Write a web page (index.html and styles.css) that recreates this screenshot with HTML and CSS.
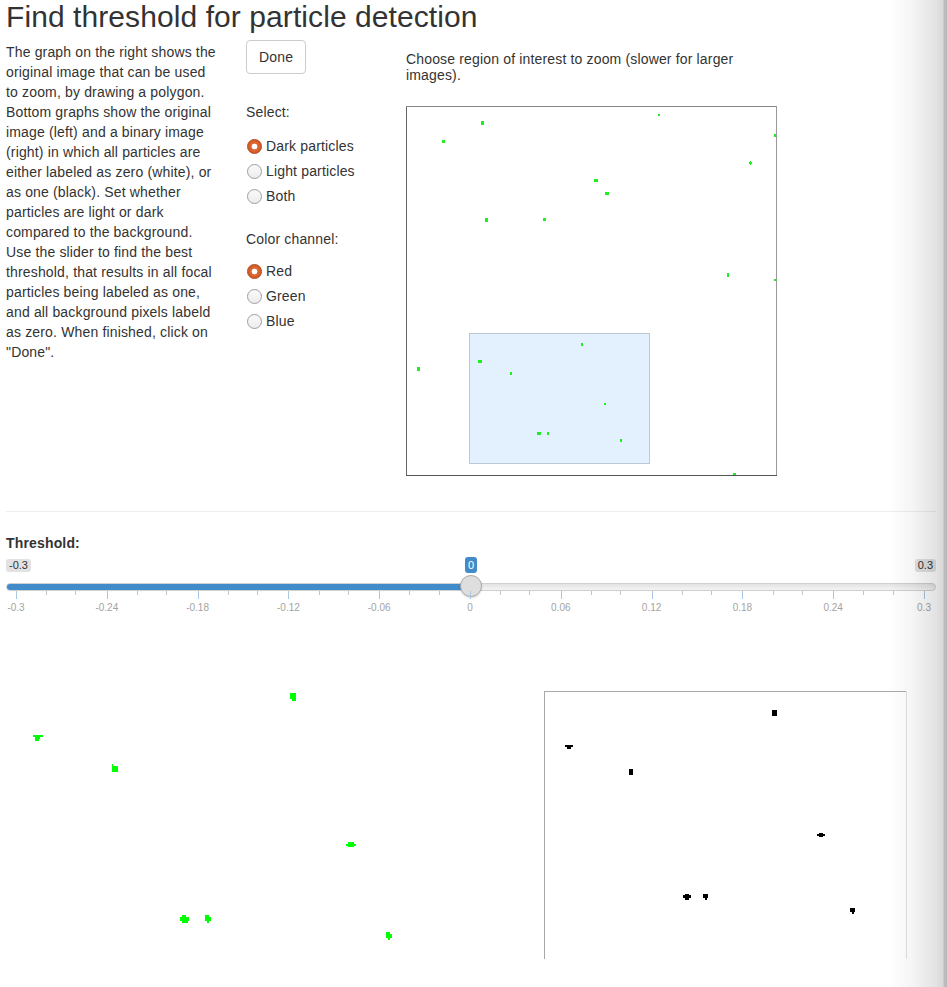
FILE: index.html
```html
<!DOCTYPE html>
<html>
<head>
<meta charset="utf-8">
<title>Find threshold for particle detection</title>
<link rel="stylesheet" href="styles.css">
</head>
<body>
<div class="page">
  <h1 class="title">Find threshold for particle detection</h1>
  <div class="top-row">
    <div class="col-text">
      <p>The graph on the right shows the original image that can be used to zoom, by drawing a polygon. Bottom graphs show the original image (left) and a binary image (right) in which all particles are either labeled as zero (white), or as one (black). Set whether particles are light or dark compared to the background. Use the slider to find the best threshold, that results in all focal particles being labeled as one, and all background pixels labeld as zero. When finished, click on "Done".</p>
    </div>
    <div class="col-controls">
      <button class="btn" type="button">Done</button>
      <div class="group">
        <div class="group-label">Select:</div>
        <div class="radios">
          <label class="radio"><input type="radio" name="ptype" checked><span>Dark particles</span></label>
          <label class="radio"><input type="radio" name="ptype"><span>Light particles</span></label>
          <label class="radio"><input type="radio" name="ptype"><span>Both</span></label>
        </div>
      </div>
      <div class="group group-channel">
        <div class="group-label">Color channel:</div>
        <div class="radios">
          <label class="radio"><input type="radio" name="chan" checked><span>Red</span></label>
          <label class="radio"><input type="radio" name="chan"><span>Green</span></label>
          <label class="radio"><input type="radio" name="chan"><span>Blue</span></label>
        </div>
      </div>
    </div>
    <div class="col-plot">
      <p class="plot-caption">Choose region of interest to zoom (slower for larger images).</p>
      <svg class="roi-plot" width="371" height="370" viewBox="0 0 371 370">
        <rect x="63.5" y="227.5" width="180" height="130" class="sel"/>
        <g class="gdots">
          <rect x="75" y="15" width="3" height="4"/>
          <rect x="36" y="34" width="3" height="3"/>
          <rect x="252" y="8" width="2" height="2"/>
          <rect x="368" y="28" width="2" height="3"/>
          <rect x="343" y="56" width="3" height="2"/>
          <rect x="344" y="55" width="1" height="4"/>
          <rect x="188" y="73" width="4" height="3"/>
          <rect x="199" y="86" width="4" height="3"/>
          <rect x="79" y="112" width="3" height="4"/>
          <rect x="137" y="112" width="3" height="3"/>
          <rect x="321" y="167" width="2" height="4"/>
          <rect x="368" y="173" width="2" height="2"/>
          <rect x="11" y="261" width="3" height="4"/>
          <rect x="72" y="254" width="4" height="3"/>
          <rect x="104" y="266" width="2" height="3"/>
          <rect x="175" y="237" width="2" height="3"/>
          <rect x="198" y="297" width="2" height="2"/>
          <rect x="131" y="326" width="4" height="3"/>
          <rect x="141" y="326" width="2" height="3"/>
          <rect x="214" y="333" width="2" height="3"/>
          <rect x="327" y="367" width="3" height="3"/>
        </g>
        <line x1="0.5" y1="0" x2="0.5" y2="370" class="b-left"/>
        <line x1="0" y1="0.5" x2="371" y2="0.5" class="b-top"/>
        <line x1="370.5" y1="0" x2="370.5" y2="370" class="b-right"/>
        <line x1="0" y1="369.5" x2="371" y2="369.5" class="b-bottom"/>
      </svg>
    </div>
  </div>

  <hr class="sep">

  <div class="threshold">
    <div class="th-label">Threshold:</div>
    <div class="irs">
      <span class="irs-min">-0.3</span>
      <span class="irs-max">0.3</span>
      <span class="irs-single" style="left:459px">0</span>
      <div class="irs-line"><div class="irs-bar" style="width:465px"></div></div>
      <div class="irs-handle" style="left:454px"></div>
      <div class="irs-grid">
        <div class="seg"><span class="lbl">-0.3</span></div>
        <div class="seg"><span class="lbl">-0.24</span></div>
        <div class="seg"><span class="lbl">-0.18</span></div>
        <div class="seg"><span class="lbl">-0.12</span></div>
        <div class="seg"><span class="lbl">-0.06</span></div>
        <div class="seg"><span class="lbl">0</span></div>
        <div class="seg"><span class="lbl">0.06</span></div>
        <div class="seg"><span class="lbl">0.12</span></div>
        <div class="seg"><span class="lbl">0.18</span></div>
        <div class="seg"><span class="lbl">0.24</span></div>
        <div class="seg seg-last"><span class="lbl">0.3</span></div>
      </div>
    </div>
  </div>

  <div class="bottom-row">
    <svg class="orig" width="532" height="268" viewBox="0 0 532 268">
      <g class="bdots">
        <rect x="284" y="2" width="6" height="6"/><rect x="286" y="8" width="4" height="2"/>
        <rect x="27" y="44" width="10" height="2"/><rect x="29" y="46" width="5" height="2"/><rect x="29" y="48" width="4" height="2"/>
        <rect x="106" y="73" width="1" height="2"/><rect x="106" y="75" width="6" height="6"/>
        <rect x="342" y="151" width="6" height="2"/><rect x="340" y="153" width="10" height="2"/><rect x="342" y="155" width="6" height="1"/>
        <rect x="176" y="224" width="4" height="2"/><rect x="174" y="226" width="9" height="4"/><rect x="176" y="230" width="6" height="2"/>
        <rect x="199" y="224" width="4" height="2"/><rect x="199" y="226" width="6" height="4"/><rect x="201" y="230" width="2" height="2"/>
        <rect x="380" y="241" width="4" height="2"/><rect x="380" y="243" width="6" height="4"/><rect x="382" y="247" width="2" height="2"/>
      </g>
    </svg>
    <svg class="binary" width="363" height="268" viewBox="0 0 363 268">
      <g class="kdots">
        <rect x="228" y="19" width="5" height="6"/>
        <rect x="21" y="54" width="8" height="2"/><rect x="23" y="56" width="4" height="2"/>
        <rect x="85" y="78" width="4" height="6"/>
        <rect x="275" y="142" width="4" height="1"/><rect x="273" y="143" width="8" height="2"/><rect x="275" y="145" width="4" height="1"/>
        <rect x="141" y="203" width="4" height="2"/><rect x="139" y="204" width="8" height="3"/><rect x="141" y="207" width="4" height="2"/>
        <rect x="159" y="203" width="5" height="4"/><rect x="161" y="207" width="2" height="2"/>
        <rect x="306" y="217" width="5" height="4"/><rect x="308" y="221" width="2" height="2"/>
      </g>
      <line x1="0.5" y1="0" x2="0.5" y2="268" class="k-left"/>
      <line x1="0" y1="0.5" x2="363" y2="0.5" class="k-top"/>
      <line x1="362.5" y1="0" x2="362.5" y2="268" class="k-right"/>
    </svg>
  </div>
</div>
<div class="edge-shadow"></div>
</body>
</html>
```

FILE: styles.css
```css
html, body {
  margin: 0;
  padding: 0;
  background: #fff;
}

body {
  font-family: "Liberation Sans", Arial, Helvetica, sans-serif;
  font-size: 14px;
  line-height: 20px;
  letter-spacing: 0.16px;
  color: #333;
  overflow: hidden;
}

.page {
  padding: 0 11px 0 6px;
}

.title {
  margin: 0 0 9px 0;
  font-size: 30px;
  line-height: 33px;
  letter-spacing: 0.08px;
  font-weight: normal;
  color: #333;
}

.top-row {
  display: flex;
  align-items: flex-start;
}

.col-text {
  width: 213px;
  flex: none;
}

.col-text p {
  margin: 0;
}

.col-controls {
  width: 160px;
  margin-left: 27px;
  flex: none;
  display: flex;
  flex-direction: column;
  align-items: flex-start;
}

.btn {
  margin-top: -2px;
  height: 34px;
  padding: 6px 12px;
  font-family: inherit;
  font-size: 14px;
  line-height: 20px;
  letter-spacing: 0.16px;
  color: #333;
  background: #fff;
  border: 1px solid #ccc;
  border-radius: 4px;
}

.group {
  margin-top: 28px;
}

.group-channel {
  margin-top: 23px;
}

.group-label {
  margin-bottom: 14px;
}

.group-channel .group-label {
  margin-bottom: 12px;
}

.radios {
  display: flex;
  flex-direction: column;
  gap: 5px;
}

.radio {
  display: flex;
  align-items: center;
  gap: 4px;
  height: 20px;
}

.radio input {
  -webkit-appearance: none;
  appearance: none;
  margin: 0 0 0 1px;
  width: 15px;
  height: 15px;
  border-radius: 50%;
  border: 1px solid #9e9e9e;
  background: linear-gradient(#fafafa, #ececec);
  box-sizing: border-box;
}

.radio input:checked {
  border-color: #a9471c;
  background: radial-gradient(circle, #fff 0 2.6px, #e2662f 3.2px, #c9521f 100%);
}

.col-plot {
  width: 371px;
  flex: none;
}

.plot-caption {
  margin: 9px 0 0 0;
  line-height: 16px;
  width: 360px;
}

.roi-plot {
  display: block;
  margin-top: 23px;
  shape-rendering: crispEdges;
}

.sel {
  fill: #e3f0fd;
  stroke: #b9c9da;
  stroke-width: 1;
}

.gdots rect {
  fill: #1df01d;
}

.b-left { stroke: #666; }
.b-top { stroke: #888; }
.b-right { stroke: #999; }
.b-bottom { stroke: #555; }

.sep {
  margin: 35px 0 0 0;
  border: 0;
  border-top: 1px solid #eee;
  width: 930px;
}

.threshold {
  margin-top: 21px;
  width: 930px;
}

.th-label {
  font-weight: bold;
  line-height: 20px;
}

.irs {
  position: relative;
  height: 62px;
  margin-top: 2px;
  letter-spacing: 0;
}

.irs-min,
.irs-max {
  position: absolute;
  top: 4px;
  font-size: 11px;
  line-height: 13px;
  padding: 0 3px;
  color: #333;
  background: #e2e2e2;
  border-radius: 3px;
}

.irs-min { left: 0; }
.irs-max { right: 0; }

.irs-single {
  position: absolute;
  top: 2px;
  width: 12px;
  text-align: center;
  font-size: 11px;
  line-height: 16px;
  color: #fff;
  background: #428bca;
  border-radius: 3px;
}

.irs-line {
  position: absolute;
  top: 28px;
  left: 0;
  right: 0;
  height: 8px;
  box-sizing: border-box;
  border: 1px solid #cfcfcf;
  background: linear-gradient(#e2e2e2, #f4f4f4);
  border-radius: 4px;
  overflow: hidden;
}

.irs-bar {
  height: 100%;
  margin: -1px 0 0 -1px;
  padding-bottom: 2px;
  background: #428bca;
  border-radius: 4px 0 0 4px;
}

.irs-handle {
  position: absolute;
  top: 20px;
  width: 22px;
  height: 22px;
  box-sizing: border-box;
  border-radius: 50%;
  border: 1px solid #ababab;
  background: #dedede;
  box-shadow: 0 1px 2px rgba(0, 0, 0, 0.15);
}

.irs-grid {
  position: absolute;
  top: 36px;
  left: 10px;
  width: 908px;
  display: grid;
  grid-template-columns: repeat(10, 1fr) 0;
}

.seg {
  position: relative;
  height: 26px;
}

.seg::before {
  content: "";
  position: absolute;
  left: 0;
  top: 0;
  width: 1px;
  height: 8px;
  background: #a8c7e4;
}

.seg::after {
  content: "";
  position: absolute;
  left: 33.3%;
  top: 0;
  width: 33.3%;
  height: 4px;
  border-left: 1px solid #c4c4c4;
  border-right: 1px solid #c4c4c4;
  box-sizing: border-box;
}

.seg-last::after {
  display: none;
}

.lbl {
  position: absolute;
  top: 11px;
  left: 0;
  transform: translateX(-50%);
  font-size: 10px;
  line-height: 12px;
  color: #a3a3a3;
  white-space: nowrap;
}

.bottom-row {
  display: flex;
  margin-top: 74px;
}

.orig,
.binary {
  display: block;
  flex: none;
  shape-rendering: crispEdges;
}

.binary {
  margin-left: 6px;
}

.bdots rect {
  fill: #00ff00;
}

.kdots rect {
  fill: #000;
}

.k-left { stroke: #a8a8a8; }
.k-top { stroke: #aaa; }
.k-right { stroke: #e2e2e2; }

.edge-shadow {
  position: fixed;
  top: 0;
  right: 0;
  width: 58px;
  height: 100%;
  pointer-events: none;
  background: linear-gradient(to right,
    rgba(0, 0, 0, 0) 0%,
    rgba(0, 0, 0, 0.04) 40%,
    rgba(0, 0, 0, 0.11) 80%,
    rgba(0, 0, 0, 0.15) 93%,
    rgba(0, 0, 0, 0.26) 95%,
    rgba(0, 0, 0, 0.28) 100%);
}
```
